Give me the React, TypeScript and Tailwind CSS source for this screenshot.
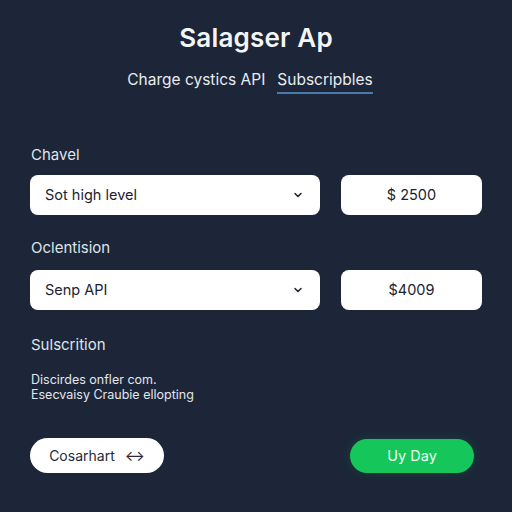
import { ChevronDown } from "lucide-react";

const rows = [
  { label: "Chavel", option: "Sot high level", price: "$ 2500" },
  { label: "Oclentision", option: "Senp API", price: "$4009" },
];

const App = () => {
  return (
    <div
      className="w-[512px] h-[512px] bg-[#1c2638] text-white flex flex-col"
      style={{ fontFamily: "Inter, 'Noto Sans', sans-serif" }}
    >
      <h1 className="mt-[21px] text-center text-[26px] leading-[34px] font-semibold tracking-[0.2px] text-[#f3f5f8]">
        Salagser Ap
      </h1>

      {/* tabs */}
      <div className="mt-[13px] pr-[12px] flex justify-center gap-[12px] text-[15.5px] leading-[24px] text-[#e8ecf1]">
        <span className="pb-[1px]">Charge cystics API</span>
        <span className="pb-0 border-b-2 border-[#4a79ab]">Subscripbles</span>
      </div>

      <div className="px-[30px] mt-[51px] flex flex-col">
        {rows.map((row, i) => (
          <div key={row.label} className={i === 0 ? "" : "mt-[23px]"}>
            <div className="pl-[1px] text-[15px] leading-[20px] text-[#dfe4ea]">{row.label}</div>
            <div className={`${i === 0 ? "mt-[10px]" : "mt-[12px]"} flex gap-[21px]`}>
              <div className="w-[290px] h-[40px] bg-white rounded-[8px] flex items-center justify-between pl-[15px] pr-[16px] text-[#1d2230] text-[14.5px]">
                <span>{row.option}</span>
                <ChevronDown className="w-[12px] h-[12px]" strokeWidth={3} />
              </div>
              <div className="w-[141px] h-[40px] bg-white rounded-[8px] flex items-center justify-center text-[#1d2230] text-[14.5px]">
                {row.price}
              </div>
            </div>
          </div>
        ))}

        <div className="mt-[25px] pl-[1px] text-[15px] leading-[20px] text-[#dfe4ea]">Sulscrition</div>
        <div className="mt-[17px] pl-[1px] text-[12.5px] leading-[15px] text-[#e3e7ec]">
          <div>Discirdes onfler com.</div>
          <div>Esecvaisy Craubie ellopting</div>
        </div>

        {/* actions */}
        <div className="mt-[36px] flex items-center justify-between pr-[8px]">
          <button className="w-[134px] h-[35px] rounded-full bg-white text-[#262b36] text-[14px] flex items-center justify-center gap-[10px]">
            Cosarhart
            <span className="text-[15px] leading-none">↔</span>
          </button>
          <button className="w-[124px] h-[34px] rounded-full bg-[#15c65a] text-[#eafff0] text-[14.5px] shadow-[0_0_12px_rgba(21,198,90,0.15)]">
            Uy Day
          </button>
        </div>
      </div>
    </div>
  );
};

export default App;
